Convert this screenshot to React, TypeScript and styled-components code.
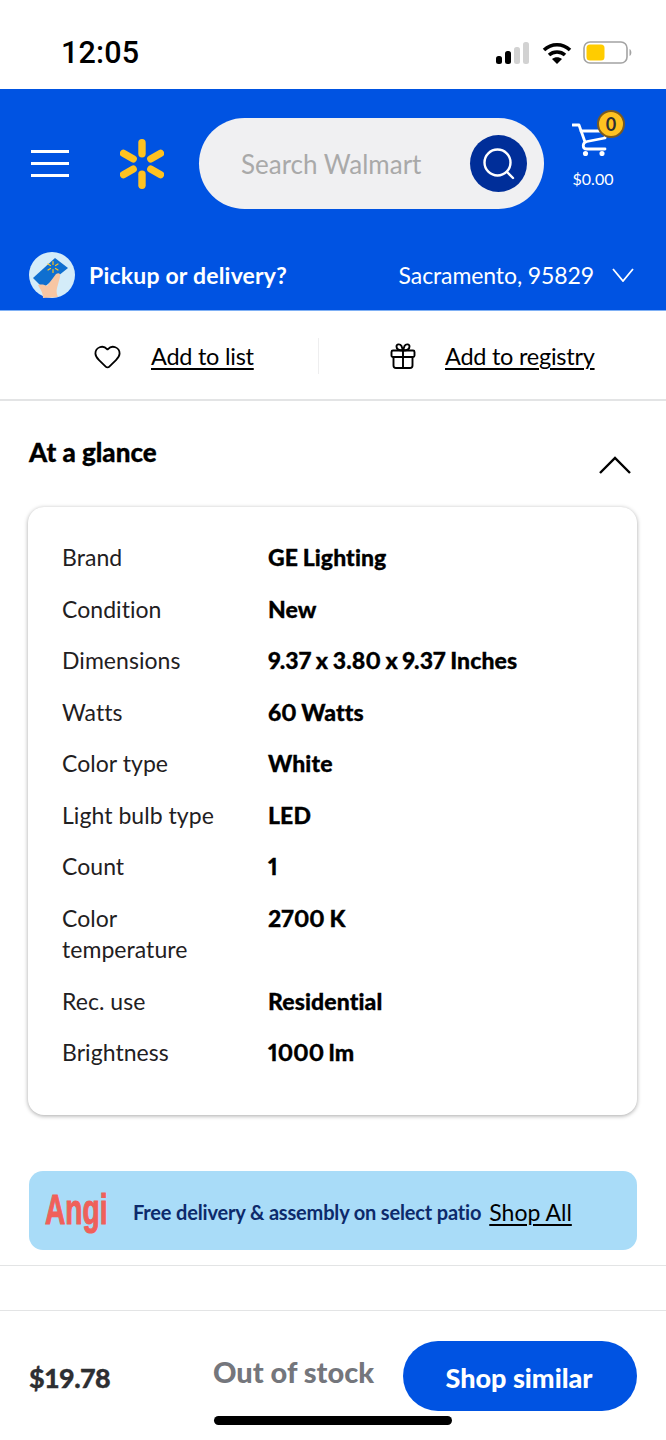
import { Fragment } from "react";
import { createGlobalStyle, styled } from "styled-components";
import { Heart } from "lucide-react";

const GlobalStyle = createGlobalStyle`
  html, body {
    margin: 0;
    padding: 0;
    background: #fff;
  }
  * {
    box-sizing: border-box;
  }
`;

const Page = styled.div`
  width: 666px;
  height: 1440px;
  overflow: hidden;
  font-family: "Lato", "Noto Sans", sans-serif;
  color: #000;
  background: #fff;
`;

const StatusBar = styled.div`
  height: 89px;
  padding: 34px 33px 0 61px;
  display: flex;
  justify-content: space-between;
  align-items: flex-start;
`;

const Clock = styled.div`
  font-family: "Roboto", sans-serif;
  font-weight: 500;
  font-size: 30.5px;
  line-height: 38px;
  letter-spacing: 0.2px;
`;

const StatusIcons = styled.div`
  display: flex;
  align-items: center;
  gap: 11px;
  padding-top: 7px;
`;

const Header = styled.header`
  height: 222px;
  background: #0053e2;
  color: #fff;
  display: flex;
  flex-direction: column;
  border-bottom: 1px solid #7fb0f5;
`;

const TopRow = styled.div`
  display: flex;
  align-items: center;
  padding: 29px 0 0 31px;
`;

const Burger = styled.div`
  width: 38px;
  display: flex;
  flex-direction: column;
  gap: 9px;
  margin-right: 51px;

  span {
    display: block;
    height: 3px;
    background: #fff;
  }
`;

const SearchBox = styled.div`
  width: 345px;
  height: 91px;
  margin-left: 35px;
  padding: 0 17px 0 42px;
  border-radius: 46px;
  background: #f0f0f2;
  display: flex;
  align-items: center;
  justify-content: space-between;
`;

const Placeholder = styled.span`
  font-size: 26px;
  color: #a9a9a9;
`;

const SearchButton = styled.div`
  width: 57px;
  height: 57px;
  border-radius: 50%;
  background: #002e99;
  display: flex;
  align-items: center;
  justify-content: center;
`;

const CartBox = styled.div`
  width: 60px;
  margin-left: 19px;
  align-self: flex-start;
  margin-top: 4px;
  display: flex;
  flex-direction: column;
  align-items: center;
  position: relative;
`;

const CartBadge = styled.span`
  position: absolute;
  top: -12px;
  right: -2px;
  width: 28px;
  height: 28px;
  border-radius: 50%;
  background: #ffc220;
  border: 2px solid #7a5a20;
  color: #2e2f32;
  font-size: 18px;
  font-weight: 700;
  display: flex;
  align-items: center;
  justify-content: center;
`;

const CartTotal = styled.span`
  font-size: 16px;
  line-height: 20px;
  margin-top: 13px;
`;

const LocationRow = styled.div`
  display: flex;
  align-items: center;
  justify-content: space-between;
  padding: 0 32px 0 29px;
  margin-top: 43px;
`;

const LocationLeft = styled.div`
  display: flex;
  align-items: center;
  gap: 14px;
  font-size: 23px;
  font-weight: 700;
  letter-spacing: 0.2px;
`;

const LocationRight = styled.div`
  display: flex;
  align-items: center;
  gap: 18px;
  font-size: 23px;
  letter-spacing: -0.1px;
`;

const ActionRow = styled.div`
  height: 90px;
  padding-top: 2px;
  display: flex;
  align-items: center;
  border-bottom: 2px solid #e3e4e5;
`;

const ActionCell = styled.div<{ $width: number; $pad: number }>`
  flex: 0 0 auto;
  width: ${(p) => p.$width}px;
  height: 36px;
  padding-left: ${(p) => p.$pad}px;
  display: flex;
  align-items: center;
  gap: 29px;

  & + & {
    border-left: 1px solid #eeeeef;
  }
`;

const UnderLink = styled.span`
  font-size: 23.5px;
  letter-spacing: -0.25px;
  text-decoration: underline;
  text-underline-offset: 3px;
  text-decoration-thickness: 1.5px;
`;

const SectionHead = styled.div`
  height: 106px;
  padding: 34px 35px 0 29px;
  display: flex;
  justify-content: space-between;
  align-items: flex-start;
`;

const SectionTitle = styled.h2`
  margin: 0;
  font-size: 26px;
  line-height: 34px;
  font-weight: 900;
  -webkit-text-stroke: 0.3px #000;
`;

const Chevron = styled.svg`
  margin-top: 21px;
`;

const Card = styled.div`
  width: 609px;
  height: 608px;
  margin-left: 28px;
  padding: 35px 34px;
  border-radius: 16px;
  background: #fff;
  box-shadow: 0 1px 4px rgba(0, 0, 0, 0.35);
  display: grid;
  grid-template-columns: 206px 1fr;
  grid-auto-rows: min-content;
  row-gap: 20px;
  font-size: 23px;
  line-height: 31.5px;
  align-content: start;
`;

const Label = styled.div`
  color: #1f2022;
  padding-right: 40px;
  letter-spacing: 0.05px;
`;

const Value = styled.div`
  font-weight: 900;
  font-feature-settings: "pnum", "lnum";
  letter-spacing: 0.1px;
  word-spacing: -1px;
  -webkit-text-stroke: 0.3px #000;
`;

const Banner = styled.div`
  width: 608px;
  height: 79px;
  margin: 56px 0 0 29px;
  padding: 2px 0 0 16px;
  border-radius: 14px;
  background: #a9dcf8;
  display: flex;
  align-items: center;
`;

const AngiLogo = styled.span`
  width: 63px;
  margin: -5px 25px 0 0;
  font-family: "Liberation Sans", sans-serif;
  font-weight: 700;
  font-size: 38px;
  color: #f0605a;
  -webkit-text-stroke: 1px #f0605a;
  transform-origin: left center;
  transform: scale(0.74, 1.12);
  white-space: nowrap;
`;

const BannerText = styled.span`
  font-size: 20px;
  font-weight: 700;
  letter-spacing: -0.17px;
  color: #0d2a6b;
  white-space: nowrap;
`;

const BannerLink = styled.span`
  margin-left: 8px;
  font-size: 23px;
  color: #000;
  text-decoration: underline;
  text-underline-offset: 3px;
  white-space: nowrap;
`;

const Divider = styled.div<{ $gap: number }>`
  height: 1px;
  margin-top: ${(p) => p.$gap}px;
  background: #e3e4e5;
`;

const Footer = styled.div`
  display: flex;
  align-items: center;
  padding: 30px 29px 0;
`;

const Price = styled.span`
  width: 184px;
  margin-top: 2px;
  font-size: 27px;
  font-weight: 900;
  letter-spacing: -0.6px;
  color: #2e2f32;
  -webkit-text-stroke: 0.3px #2e2f32;
`;

const Stock = styled.span`
  width: 190px;
  margin-top: -9px;
  font-size: 29px;
  font-weight: 900;
  color: #74767c;
  white-space: nowrap;
`;

const ShopButton = styled.button`
  width: 234px;
  height: 70px;
  padding: 2px 2px 0 0;
  border: 0;
  border-radius: 36px;
  background: #0053e2;
  color: #fff;
  font: 900 27px "Lato", sans-serif;
`;

const HomeBar = styled.div`
  width: 238px;
  height: 9px;
  margin: 5px 0 0 214px;
  border-radius: 5px;
  background: #000;
`;

const rows: [string, string][] = [
  ["Brand", "GE Lighting"],
  ["Condition", "New"],
  ["Dimensions", "9.37 x 3.80 x 9.37 Inches"],
  ["Watts", "60 Watts"],
  ["Color type", "White"],
  ["Light bulb type", "LED"],
  ["Count", "1"],
  ["Color temperature", "2700 K"],
  ["Rec. use", "Residential"],
  ["Brightness", "1000 lm"],
];

const Spark = () => (
  <svg width="44" height="50" viewBox="-22 -25 44 50">
    {[0, 60, 120, 180, 240, 300].map((a) => (
      <rect key={a} x="-3.7" y="-25" width="7.4" height="18.5" rx="3.7" fill="#ffc220" transform={`rotate(${a})`} />
    ))}
  </svg>
);

const App = () => {
  return (
    <Page>
      <GlobalStyle />
      <StatusBar>
        <Clock>12:05</Clock>
        <StatusIcons>
          <svg width="35" height="22" viewBox="0 0 35 22">
            <rect x="0" y="14" width="6" height="8" rx="2.5" fill="#000" />
            <rect x="9" y="9" width="6" height="13" rx="2.5" fill="#000" />
            <rect x="18" y="5" width="6" height="17" rx="2.5" fill="#d2d2d2" />
            <rect x="27" y="0" width="6" height="22" rx="2.5" fill="#d2d2d2" />
          </svg>
          <svg width="30" height="22" viewBox="0 0 30 22" fill="none" stroke="#000" strokeWidth="3.6">
            <path d="M2 8 C9.5 1 20.5 1 28 8" />
            <path d="M7 13 C11.5 9 18.5 9 23 13" />
            <path d="M10 17 L15 22 L20 17 C17 14.6 13 14.6 10 17Z" fill="#000" stroke="none" />
          </svg>
          <svg width="50" height="23" viewBox="0 0 50 23">
            <rect x="1" y="1" width="43" height="21" rx="6" fill="none" stroke="#a3a3a3" strokeWidth="1.6" />
            <rect x="3.5" y="3.5" width="18" height="16" rx="3.5" fill="#ffcc00" />
            <path d="M46.5 8 C49 9 49 14 46.5 15Z" fill="#a3a3a3" />
          </svg>
        </StatusIcons>
      </StatusBar>

      <Header>
        <TopRow>
          <Burger>
            <span />
            <span />
            <span />
          </Burger>
          <Spark />
          <SearchBox>
            <Placeholder>Search Walmart</Placeholder>
            <SearchButton>
              <svg width="34" height="34" viewBox="0 0 34 34" fill="none" stroke="#fff" strokeWidth="2.4" strokeLinecap="round">
                <circle cx="15.5" cy="15.5" r="13" />
                <path d="M25 25 L31 31" />
              </svg>
            </SearchButton>
          </SearchBox>
          <CartBox>
            <svg width="42" height="34" viewBox="0 0 42 34" fill="none" stroke="#fff" strokeWidth="2.8" strokeLinecap="round" strokeLinejoin="round">
              <path d="M0.5 3 H7 L13 20" />
              <path d="M9 9 H34 L33 16 L15 19.5 C10 20.5 10 27 15 27 H33" />
              <circle cx="13.5" cy="31.5" r="1.2" fill="#fff" />
              <circle cx="30" cy="31.5" r="1.2" fill="#fff" />
            </svg>
            <CartBadge>0</CartBadge>
            <CartTotal>$0.00</CartTotal>
          </CartBox>
        </TopRow>
        <LocationRow>
          <LocationLeft>
            <svg width="46" height="46" viewBox="0 0 46 46">
              <circle cx="23" cy="23" r="23" fill="#d4ecf9" />
              <path d="M4 26 L26 6 L39 16 L14 36Z" fill="#0f6fd0" />
              <g stroke="#ffc220" strokeWidth="1.2" strokeLinecap="round">
                <path d="M24 9.5 V12.5 M24 17.5 V20.5 M19 12 L21.5 13.5 M26.5 16.5 L29 18 M19 18 L21.5 16.5 M26.5 13.5 L29 12" />
              </g>
              <path d="M14 46 C14 40 11 37 9 33 C13 32 16 33 18 34 L27 22 C30 20 32 22 31 25 L28 36 C27 40 28 43 29 45Z" fill="#f7c6a3" />
            </svg>
            Pickup or delivery?
          </LocationLeft>
          <LocationRight>
            Sacramento, 95829
            <svg width="22" height="14" viewBox="0 0 22 14" fill="none" stroke="#fff" strokeWidth="1.8">
              <path d="M1 1 L11 13 L21 1" />
            </svg>
          </LocationRight>
        </LocationRow>
      </Header>

      <ActionRow>
        <ActionCell $width={318} $pad={93}>
          <Heart size={29} strokeWidth={1.5} />
          <UnderLink>Add to list</UnderLink>
        </ActionCell>
        <ActionCell $width={348} $pad={71}>
          <svg width="26" height="26" viewBox="0 0 26 26" fill="none" stroke="#000" strokeWidth="1.9" strokeLinejoin="round">
            <rect x="1.5" y="7.5" width="23" height="6.5" rx="1.5" />
            <path d="M3.5 14 V22.5 C3.5 24 4.5 25 6 25 H20 C21.5 25 22.5 24 22.5 22.5 V14" />
            <path d="M13 7.5 V25" />
            <path d="M13 7.5 C9 7.5 6.5 6 6.5 3.5 C6.5 1 10 0.5 11.5 3 Z" />
            <path d="M13 7.5 C17 7.5 19.5 6 19.5 3.5 C19.5 1 16 0.5 14.5 3 Z" />
          </svg>
          <UnderLink>Add to registry</UnderLink>
        </ActionCell>
      </ActionRow>

      <SectionHead>
        <SectionTitle>At a glance</SectionTitle>
        <Chevron width="32" height="18" viewBox="0 0 32 18" fill="none" stroke="#000" strokeWidth="2.4">
          <path d="M1 17 L16 2 L31 17" />
        </Chevron>
      </SectionHead>

      <Card>
        {rows.map(([label, value]) => (
          <Fragment key={label}>
            <Label>{label}</Label>
            <Value>{value}</Value>
          </Fragment>
        ))}
      </Card>

      <Banner>
        <AngiLogo>Angi</AngiLogo>
        <BannerText>Free delivery &amp; assembly on select patio</BannerText>
        <BannerLink>Shop All</BannerLink>
      </Banner>

      <Divider $gap={15} />
      <Divider $gap={44} />

      <Footer>
        <Price>$19.78</Price>
        <Stock>Out of stock</Stock>
        <ShopButton>Shop similar</ShopButton>
      </Footer>
      <HomeBar />
    </Page>
  );
};

export default App;
